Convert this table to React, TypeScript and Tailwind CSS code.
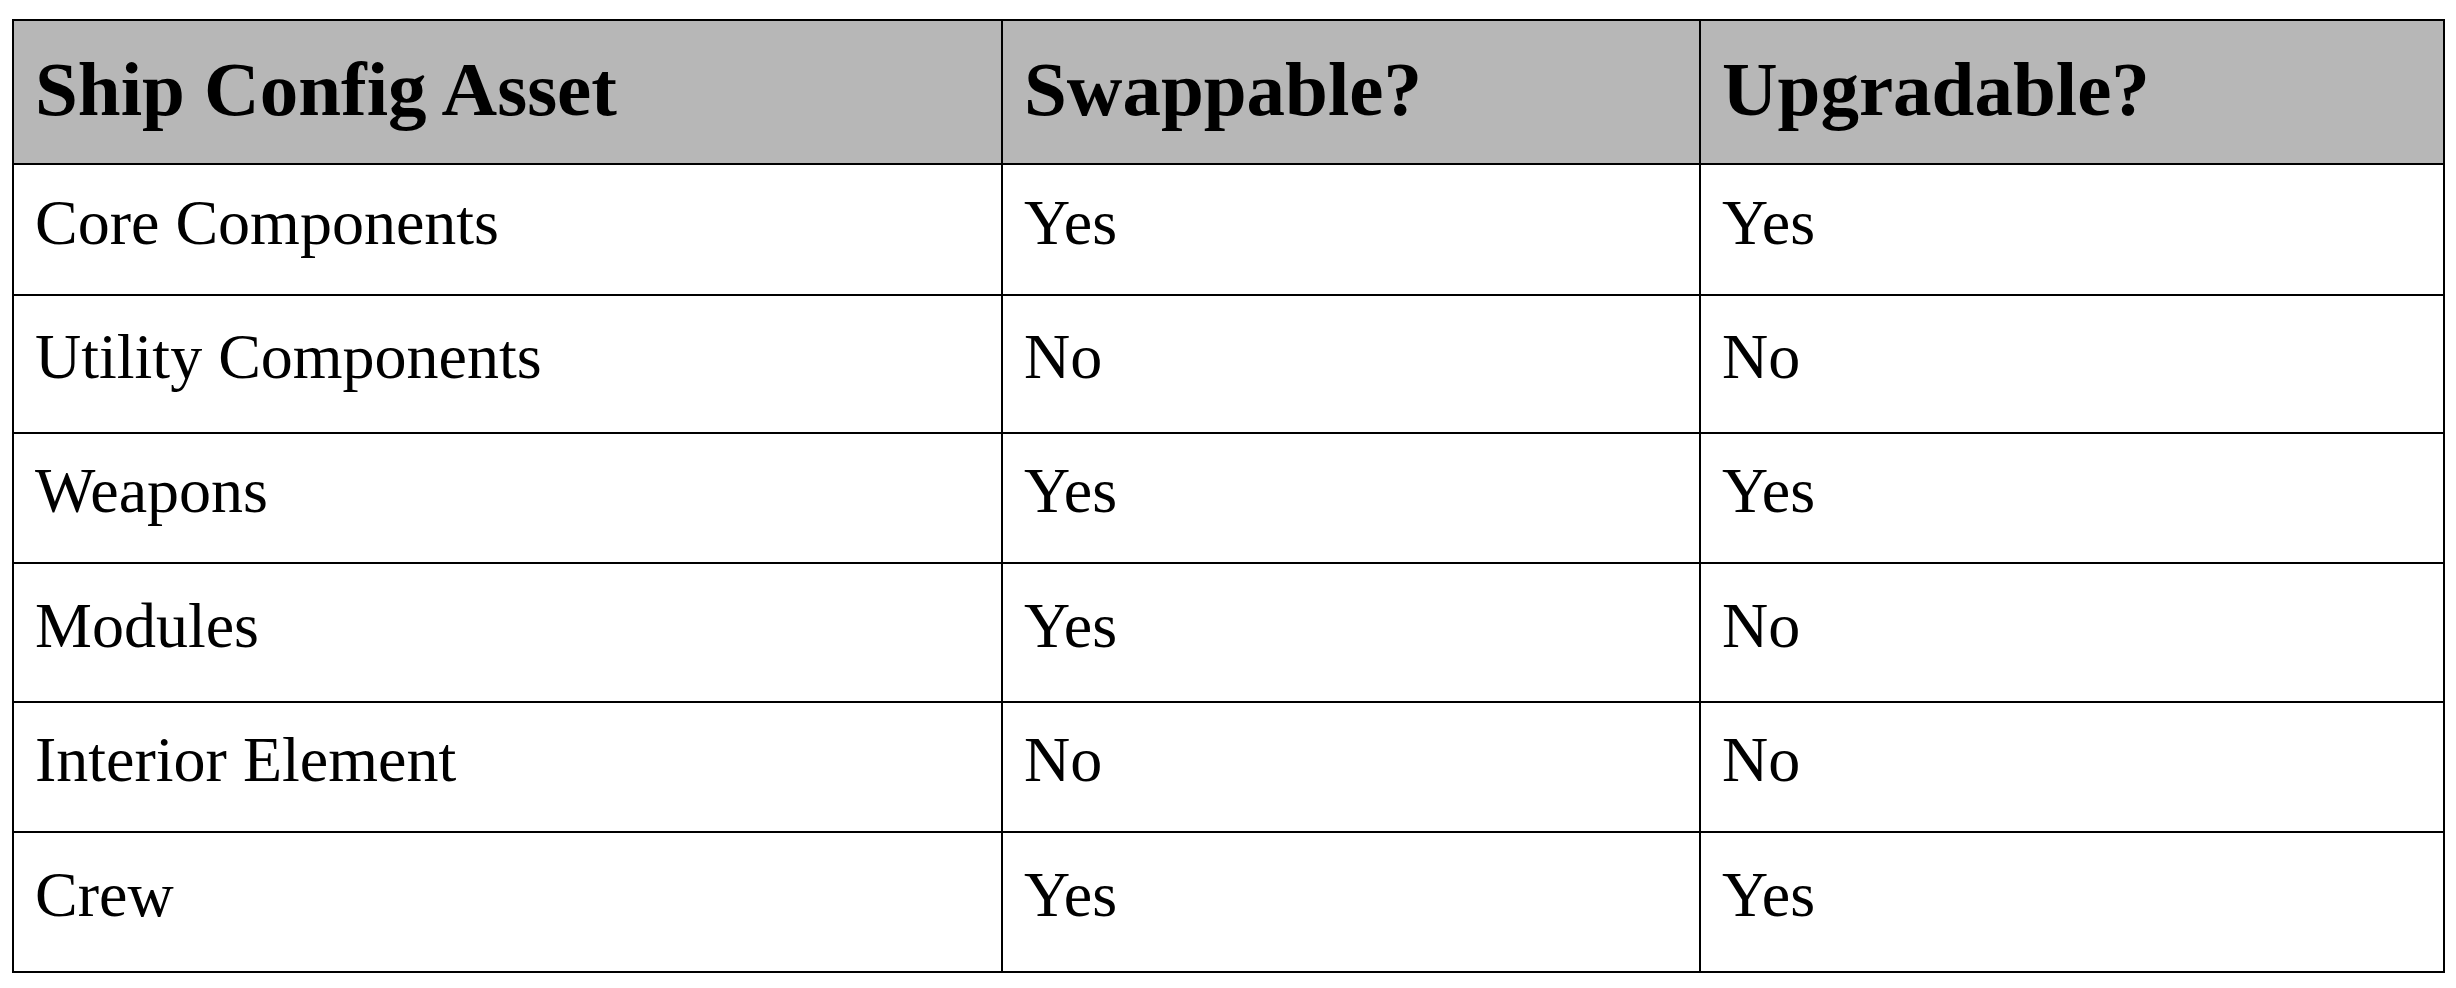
const rows = [
  { asset: "Core Components", swap: "Yes", upgrade: "Yes", h: 131 },
  { asset: "Utility Components", swap: "No", upgrade: "No", h: 138 },
  { asset: "Weapons", swap: "Yes", upgrade: "Yes", h: 130 },
  { asset: "Modules", swap: "Yes", upgrade: "No", h: 139 },
  { asset: "Interior Element", swap: "No", upgrade: "No", h: 130 },
  { asset: "Crew", swap: "Yes", upgrade: "Yes", h: 140 },
];

export default function App() {
  return (
    <div className="min-h-screen bg-white pl-[12px] pt-[19px] font-['Liberation_Serif','DejaVu_Serif',serif] text-black">
      <table className="w-[2431px] table-fixed border-collapse border-2 border-black">
        <colgroup>
          <col className="w-[989px]" />
          <col className="w-[698px]" />
          <col className="w-[744px]" />
        </colgroup>
        <thead>
          <tr className="h-[144px] bg-[#b7b7b7]">
            {["Ship Config Asset", "Swappable?", "Upgradable?"].map((t) => (
              <th
                key={t}
                className="border-2 border-black px-[21px] pb-[6px] text-left align-middle text-[77px] font-bold leading-none"
              >
                {t}
              </th>
            ))}
          </tr>
        </thead>
        <tbody>
          {rows.map((r) => (
            <tr key={r.asset} style={{ height: r.h }}>
              {[r.asset, r.swap, r.upgrade].map((c, i) => (
                <td
                  key={i}
                  className="border-2 border-black px-[21px] pb-[14px] text-left align-middle text-[64px] leading-none"
                >
                  {c}
                </td>
              ))}
            </tr>
          ))}
        </tbody>
      </table>
    </div>
  );
}
